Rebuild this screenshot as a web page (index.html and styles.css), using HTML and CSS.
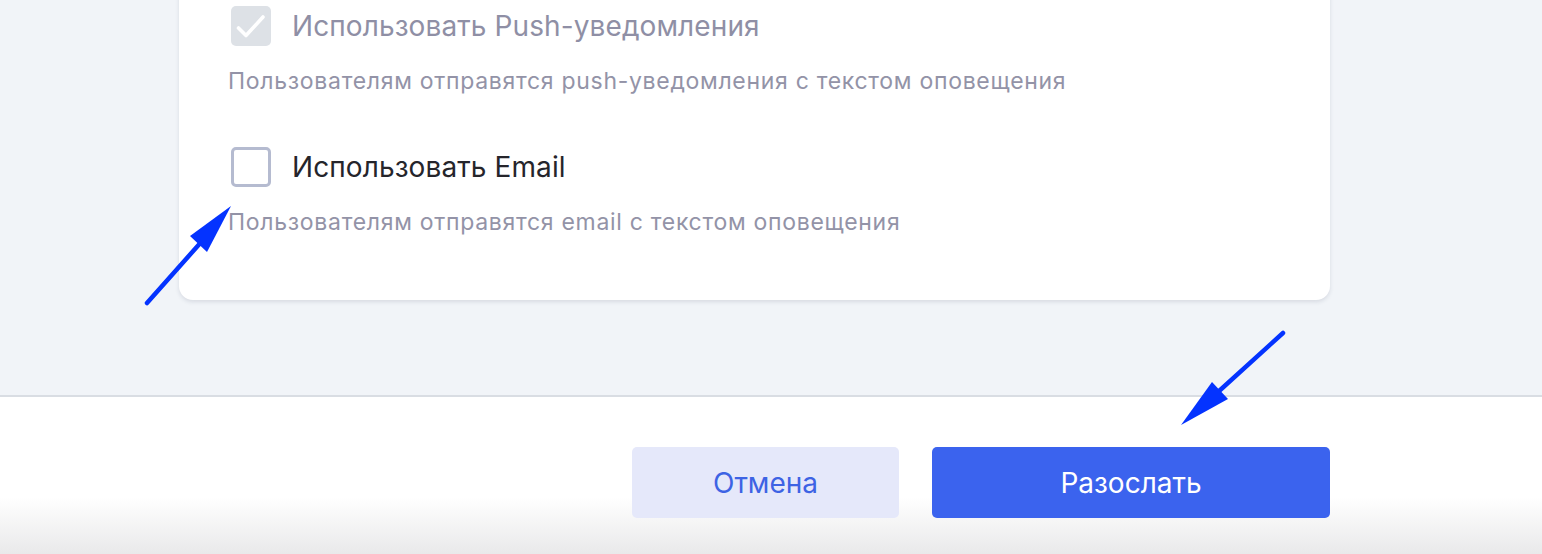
FILE: index.html
```html
<!DOCTYPE html>
<html lang="ru">
<head>
<meta charset="utf-8">
<link rel="stylesheet" href="styles.css">
</head>
<body>
<div class="page">
  <div class="content">
    <div class="card">
      <div class="option">
        <span class="box box-checked">
          <svg viewBox="0 0 40 40" width="40" height="40"><path d="M7.5 22 L15 29.5 L32 11" fill="none" stroke="#fff" stroke-width="3.6" stroke-linecap="round" stroke-linejoin="round"/></svg>
        </span>
        <span class="label label-disabled">Использовать Push-уведомления</span>
      </div>
      <div class="desc">Пользователям отправятся push-уведомления с текстом оповещения</div>
      <div class="option option-second">
        <span class="box box-empty"></span>
        <span class="label">Использовать Email</span>
      </div>
      <div class="desc">Пользователям отправятся email с текстом оповещения</div>
    </div>
  </div>
  <div class="footer">
    <button class="btn btn-cancel">Отмена</button>
    <button class="btn btn-send">Разослать</button>
  </div>
  <svg class="arrows" width="1542" height="554" viewBox="0 0 1542 554">
    <line x1="147" y1="303" x2="203" y2="240" stroke="#0433ff" stroke-width="4.5" stroke-linecap="round"/>
    <polygon points="231,206 190,236 207,252" fill="#0433ff"/>
    <line x1="1283" y1="333" x2="1218" y2="392" stroke="#0433ff" stroke-width="4.5" stroke-linecap="round"/>
    <polygon points="1181,425 1212,382 1228,399" fill="#0433ff"/>
  </svg>
</div>
</body>
</html>
```

FILE: styles.css
```css
* { box-sizing: border-box; }
html, body { margin: 0; padding: 0; }
body {
  font-family: Inter, "Noto Sans", sans-serif;
  width: 1542px;
  height: 554px;
  overflow: hidden;
  background: #fff;
}
.page {
  position: relative;
  width: 1542px;
  height: 554px;
  display: flex;
  flex-direction: column;
}
.content {
  height: 397px;
  background: #f1f4f8;
  border-bottom: 2px solid #d9dde3;
  padding-left: 179px;
  overflow: hidden;
}
.card {
  width: 1151px;
  margin-top: -20px;
  padding: 26px 0 63px 49px;
  background: #fff;
  border-radius: 0 0 14px 14px;
  box-shadow: 0 2px 4px rgba(30, 40, 70, 0.12);
}
.option {
  display: flex;
  align-items: center;
  gap: 21px;
  height: 40px;
  padding-left: 3px;
}
.option-second { margin-top: 51px; }
.box {
  width: 40px;
  height: 40px;
  border-radius: 5px;
  flex: none;
  display: block;
}
.box svg { display: block; }
.box-checked { background: #dde1e6; }
.box-empty { border: 3px solid #b5bbd0; background: #fff; }
.label {
  font-size: 28px;
  color: #25252b;
  letter-spacing: 0.1px;
}
.label-disabled { color: #8f8fa5; }
.desc {
  margin-top: 20px;
  font-size: 23px;
  line-height: 30px;
  letter-spacing: 0.7px;
  color: #9393a7;
}
.footer {
  flex: 1;
  display: flex;
  justify-content: flex-end;
  align-items: flex-start;
  gap: 33px;
  padding: 50px 212px 0 0;
  background: linear-gradient(to bottom, #fff 0, #fff 100px, #e9e9ea 157px);
}
.btn {
  height: 71px;
  border: none;
  border-radius: 5px;
  font-family: Inter, "Noto Sans", sans-serif;
  font-size: 28px;
  cursor: pointer;
}
.btn-cancel {
  width: 267px;
  background: #e5e8fa;
  color: #3d63e4;
}
.btn-send {
  width: 398px;
  background: #3b63ee;
  color: #fff;
}
.arrows {
  position: absolute;
  left: 0;
  top: 0;
  pointer-events: none;
}
```
